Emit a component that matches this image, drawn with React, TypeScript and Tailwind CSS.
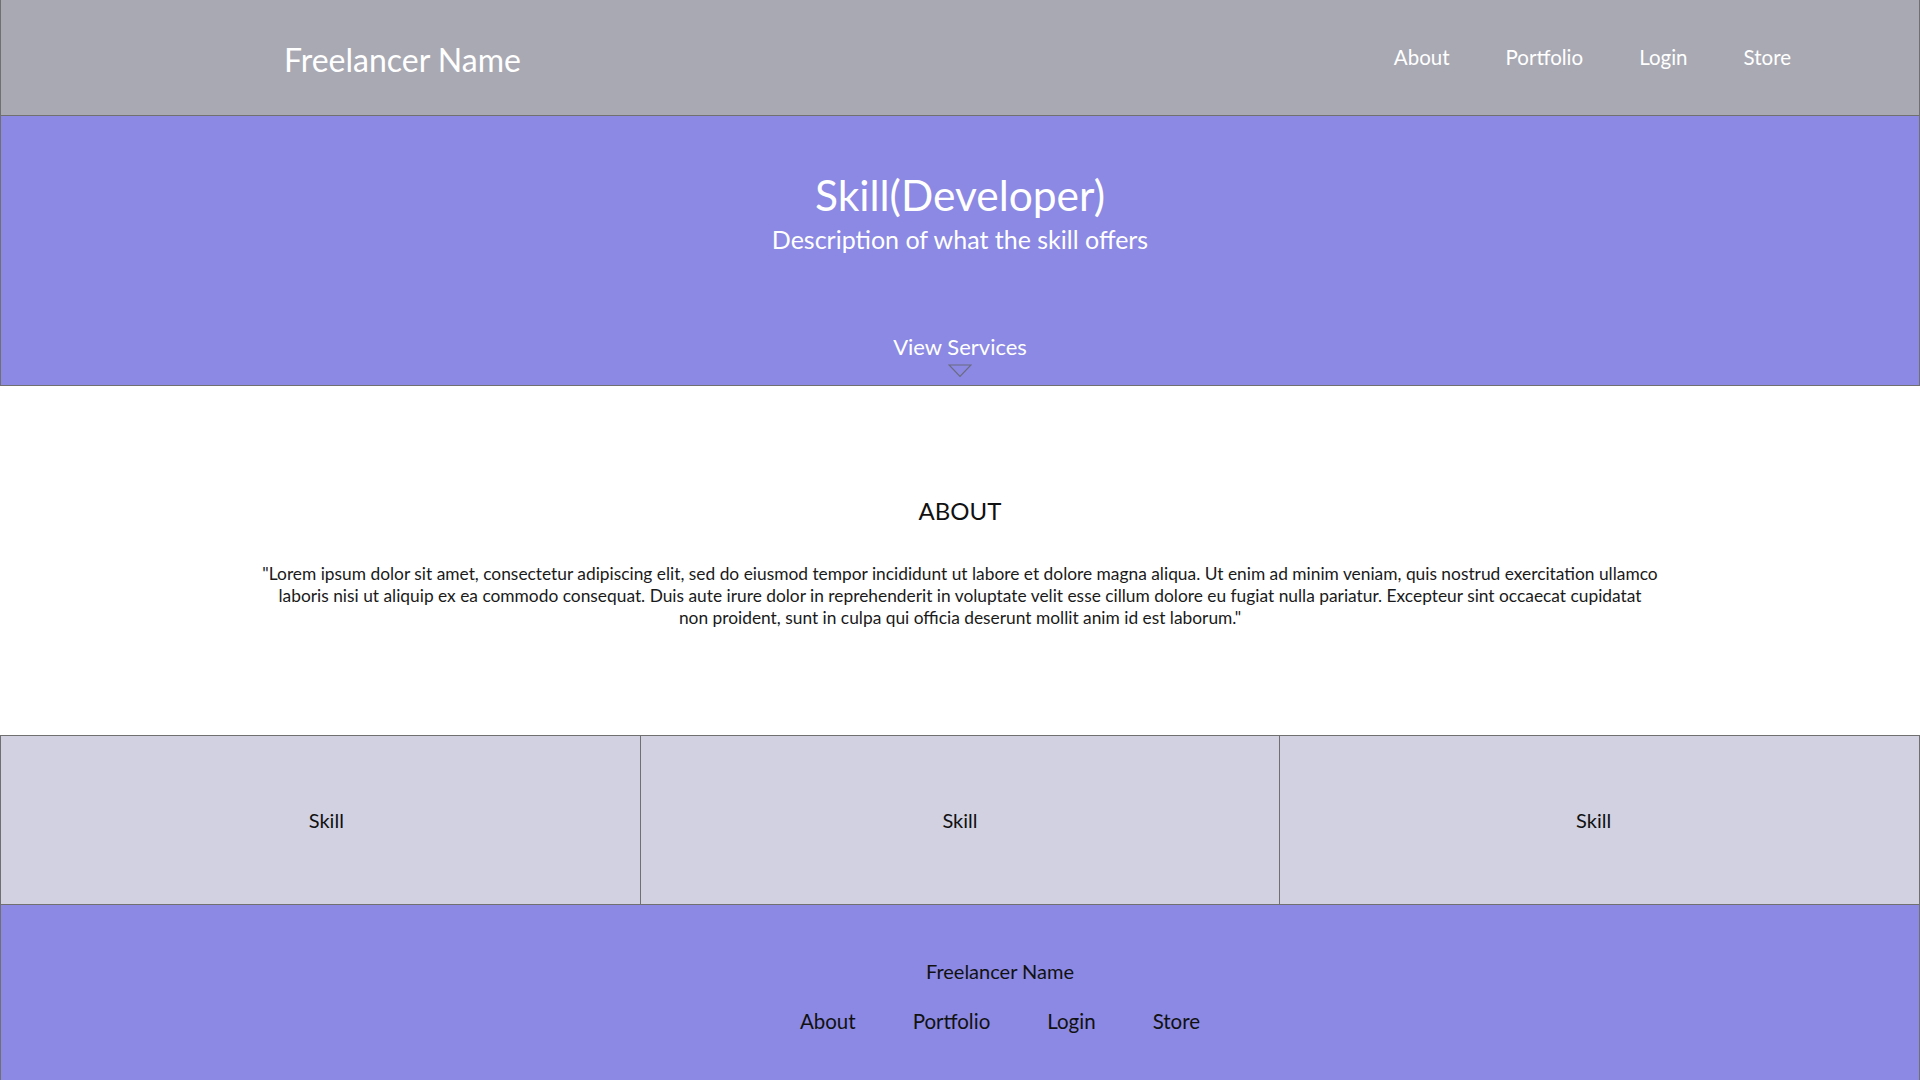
import React from 'react';

const navLinks = ['About', 'Portfolio', 'Login', 'Store'];

const skills = ['Skill', 'Skill', 'Skill'];

// the mockup breaks the quote in three fixed lines
const loremLines = [
    '"Lorem ipsum dolor sit amet, consectetur adipiscing elit, sed do eiusmod tempor incididunt ut labore et dolore magna aliqua. Ut enim ad minim veniam, quis nostrud exercitation ullamco',
    'laboris nisi ut aliquip ex ea commodo consequat. Duis aute irure dolor in reprehenderit in voluptate velit esse cillum dolore eu fugiat nulla pariatur. Excepteur sint occaecat cupidatat',
    'non proident, sunt in culpa qui officia deserunt mollit anim id est laborum."',
];

const App = () => {
    return (
        <div className="w-[1920px] h-[1080px] bg-white font-['Lato','Open_Sans',sans-serif] overflow-hidden">
            {/* top bar */}
            <header className="h-[116px] bg-[#a9a9b3] border-x border-b border-[#707070] flex items-center justify-between pl-[283px] pr-[128px]">
                <h1 className="text-[32px] leading-none text-white mt-[4px]">Freelancer Name</h1>
                <nav className="flex items-center gap-[56px]">
                    {navLinks.map((link) => (
                        <a key={link} href="#" className="text-[20.5px] leading-none text-white">
                            {link}
                        </a>
                    ))}
                </nav>
            </header>

            {/* hero */}
            <section className="h-[270px] bg-[#8b89e3] border-x border-b border-[#707070] flex flex-col items-center pt-[53px]">
                <h2 className="text-[42.5px] leading-[52px] text-white">Skill(Developer)</h2>
                <p className="text-[25px] leading-[32px] text-white mt-[2px]">Description of what the skill offers</p>
                <button className="mt-[78px] flex flex-col items-center text-white">
                    <span className="text-[22px] leading-[28px]">View Services</span>
                    <svg width="24" height="14" viewBox="0 0 24 14" className="mt-[3px]">
                        <polygon points="1,1 23,1 12,12.5" fill="none" stroke="#6b6b80" strokeWidth="1.2" />
                    </svg>
                </button>
            </section>

            {/* about */}
            <section className="h-[349px] flex flex-col items-center pt-[110px]">
                <h3 className="text-[24px] leading-[30px] text-[#111]">ABOUT</h3>
                <p className="mt-[37px] text-center text-[17.35px] leading-[22px] text-[#1a1a1a] whitespace-nowrap">
                    {loremLines.map((line, i) => (
                        <span key={i} className="block">
                            {line}
                        </span>
                    ))}
                </p>
            </section>

            {/* skills */}
            <section className="h-[170px] grid grid-cols-3 border-t border-r border-[#707070]">
                {skills.map((skill, i) => (
                    <div
                        key={i}
                        className={`bg-[#d1d1e1] border-l border-b border-[#707070] flex items-center justify-center text-[20px] text-[#111] ${
                            i === 0 ? 'pl-[12px]' : i === 2 ? 'pr-[12px]' : ''
                        }`}
                    >
                        {skill}
                    </div>
                ))}
            </section>

            {/* footer */}
            <footer className="h-[175px] bg-[#8b89e3] border-x border-[#707070] flex flex-col items-center pt-[53px] pl-[80px]">
                <p className="text-[20px] leading-[26px] text-[#111]">Freelancer Name</p>
                <nav className="mt-[23px] flex items-center gap-[57px]">
                    {navLinks.map((link) => (
                        <a key={link} href="#" className="text-[20.5px] leading-[28px] text-[#111]">
                            {link}
                        </a>
                    ))}
                </nav>
            </footer>
        </div>
    );
};

export default App;
